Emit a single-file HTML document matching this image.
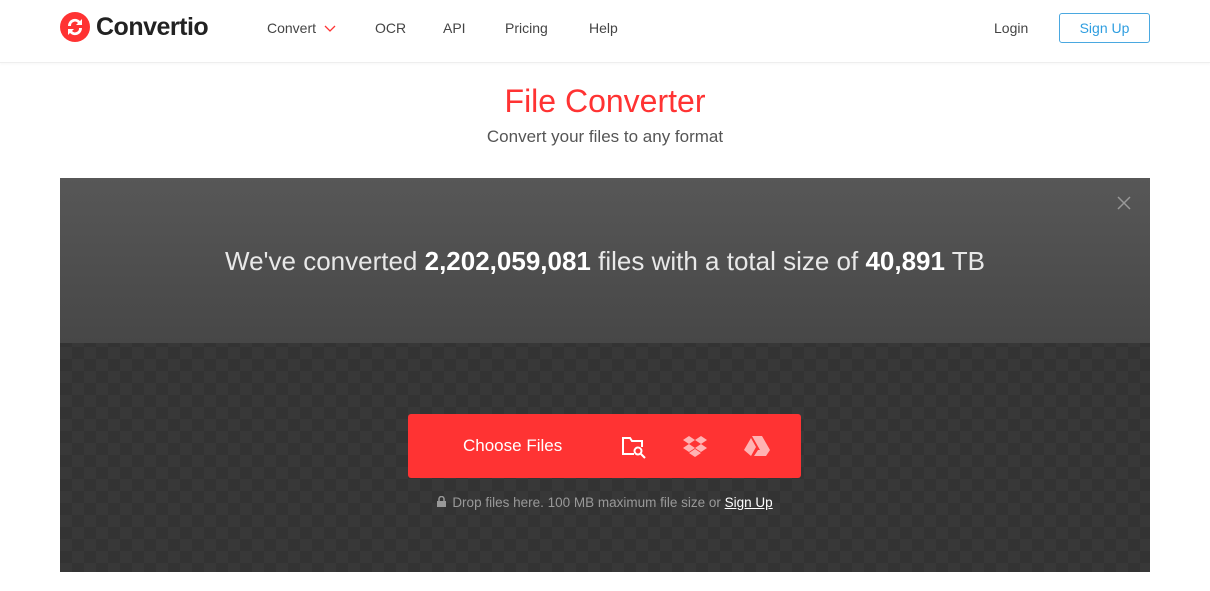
<!DOCTYPE html>
<html><head><style>
body{margin:0;width:1210px;height:591px;background:#fff;font-family:"Liberation Sans",sans-serif;overflow:hidden;position:relative}
.hdr{position:absolute;top:0;left:0;width:1210px;height:62px;border-bottom:1px solid #eee;box-shadow:0 1px 3px rgba(0,0,0,.04)}
.logo{position:absolute;left:60px;top:12px;display:flex;align-items:center}
.logo span{font-weight:bold;font-size:25px;color:#222;margin-left:6px;letter-spacing:-0.5px}
.nav{position:absolute;top:20px;font-size:14px;color:#444}
.signup{position:absolute;left:1059px;top:13px;width:89px;height:28px;border:1px solid #4aa8e0;border-radius:3px;color:#2f9ee0;font-size:14px;text-align:center;line-height:28px}
h1{position:absolute;top:83px;left:0;width:1210px;text-align:center;margin:0;font-weight:normal;color:#ff3333;font-size:32px}
.sub{position:absolute;top:127px;width:1210px;text-align:center;color:#555;font-size:17px}
.box{position:absolute;left:60px;top:178px;width:1090px;height:394px;background-color:#383838;background-image:linear-gradient(45deg,#333 25%,transparent 25%,transparent 75%,#333 75%),linear-gradient(45deg,#333 25%,transparent 25%,transparent 75%,#333 75%);background-size:24px 24px;background-position:0 1px,12px 13px}
.top{position:absolute;left:0;top:0;width:1090px;height:165px;background:linear-gradient(#575757,#474747)}
.stat{position:absolute;top:68px;width:1090px;text-align:center;color:#e8e8e8;font-size:26px}
.stat b{color:#fff}
.btn{position:absolute;left:348px;top:236px;width:393px;height:64px;background:#ff3333;border-radius:3px}
.drop{position:absolute;top:317px;width:1090px;text-align:center;color:#999;font-size:13.5px}
.drop u{color:#fff}
</style></head><body>
<div class="hdr">
<div class="logo"><svg width="30" height="30" viewBox="0 0 30 30"><circle cx="15" cy="15" r="15" fill="#ff3333"/><path d="M8 14a7 7 0 0 1 12-5l2-2v6h-6l2-2a4 4 0 0 0-7 3z M22 16a7 7 0 0 1-12 5l-2 2v-6h6l-2 2a4 4 0 0 0 7-3z" fill="#fff"/></svg><span>Convertio</span></div>
<div class="nav" style="left:267px">Convert <svg width="12" height="8" style="margin-left:4px"><path d="M1 1l5 5 5-5" stroke="#ff3333" fill="none" stroke-width="1.3"/></svg></div>
<div class="nav" style="left:375px">OCR</div>
<div class="nav" style="left:443px">API</div>
<div class="nav" style="left:505px">Pricing</div>
<div class="nav" style="left:589px">Help</div>
<div class="nav" style="left:994px">Login</div>
<div class="signup">Sign Up</div>
</div>
<h1>File Converter</h1>
<div class="sub">Convert your files to any format</div>
<div class="box">
<div class="top"><svg style="position:absolute;left:1057px;top:18px" width="14" height="14"><path d="M1 1l12 12M13 1L1 13" stroke="#999" stroke-width="1.5"/></svg>
<div class="stat">We've converted <b>2,202,059,081</b> files with a total size of <b>40,891</b> TB</div></div>
<div class="btn">
<div style="position:absolute;left:55px;top:22px;color:#fff;font-size:17px">Choose Files</div>
<svg style="position:absolute;left:213px;top:21px" width="26" height="24" viewBox="0 0 26 24"><path d="M13 19H2V3h7l2 3h10v6" fill="none" stroke="#fff" stroke-width="2"/><circle cx="17" cy="16" r="3.5" fill="none" stroke="#fff" stroke-width="2"/><path d="M20 19l4 4" stroke="#fff" stroke-width="2"/></svg>
<svg style="position:absolute;left:274px;top:22px" width="26" height="22" viewBox="0 0 26 22"><path d="M7 0l6 4-6 4-6-4zM19 0l6 4-6 4-6-4zM7 8l6 4-6 4-6-4zM19 8l6 4-6 4-6-4zM7 17l6-4 6 4-6 4z" fill="#ffb3b3"/></svg>
<svg style="position:absolute;left:336px;top:22px" width="26" height="22" viewBox="0 0 26 22"><path d="M8 0h10l8 14h-10zM7 2l5 9-5 9-7-6zM10 20l4-6h12l-4 6z" fill="#ffb3b3"/></svg>
</div>
<div class="drop"><svg width="9" height="11" style="margin-right:6px"><rect x="0" y="5" width="9" height="6" fill="#999"/><path d="M2 5V3a2.5 2.5 0 0 1 5 0v2" fill="none" stroke="#999" stroke-width="1.5"/></svg>Drop files here. 100 MB maximum file size or <u>Sign Up</u></div>
</div>
</body></html>
